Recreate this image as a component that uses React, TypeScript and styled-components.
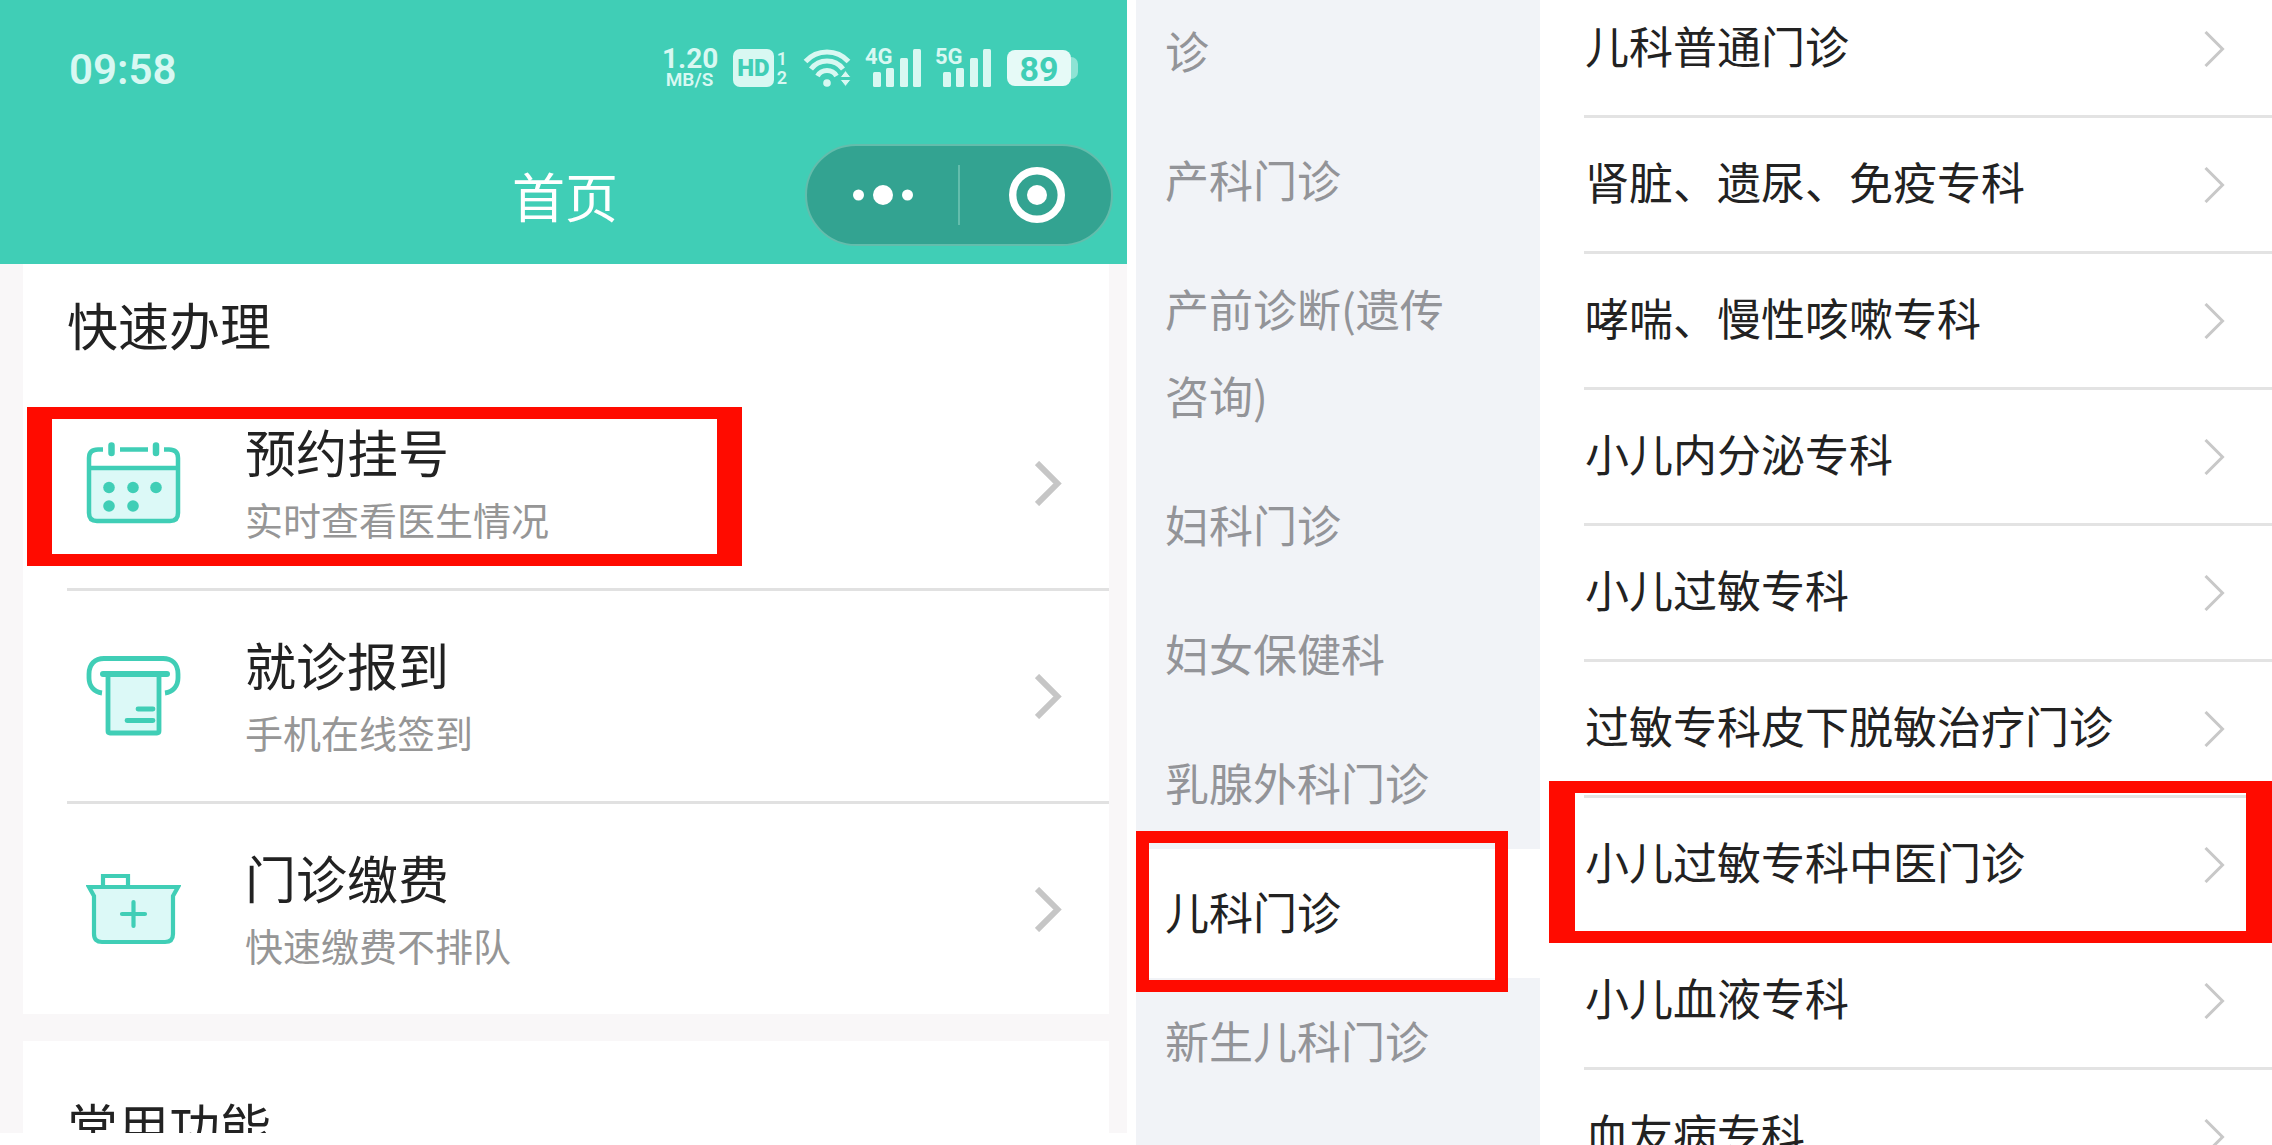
import React from "react";
import styled, { createGlobalStyle, css } from "styled-components";

const cjk = `"Noto Sans CJK SC", "Noto Sans", sans-serif`;
const latin = `Roboto, "Noto Sans CJK SC", sans-serif`;
const teal = "#40ceb6";
const pale = "#d8f8f2";
const iconFill = "#dcf9f7";

const GlobalStyle = createGlobalStyle`
  *, *::before, *::after { box-sizing: border-box; }
  body { margin: 0; background: #fff; font-family: ${cjk}; color: #222; }
  ul { list-style: none; margin: 0; padding: 0; }
  h1, h2 { margin: 0; font-weight: 400; }
  a { color: inherit; text-decoration: none; }
  svg { display: block; flex: none; }
  button { font: inherit; color: inherit; border: 0; padding: 0; background: none; cursor: pointer; }
`;

const Page = styled.div`
  display: grid;
  grid-template-columns: minmax(0, 1127fr) minmax(0, 1136fr);
  column-gap: 9px;
  height: 100vh;
  overflow: hidden;
`;

const HomePanel = styled.section`
  display: flex;
  flex-direction: column;
  margin-bottom: 12px;
  min-height: 0;
  overflow: hidden;
  background: #f9f7f8;
`;

const Header = styled.header`
  flex: none;
  background: ${teal};
  color: #fff;
  padding-bottom: 10px;
`;

const StatusBar = styled.div`
  display: flex;
  align-items: center;
  justify-content: space-between;
  height: 136px;
  padding: 0 49px 0 69px;
  font-family: ${latin};
  color: ${pale};
`;

const Clock = styled.time`
  padding-top: 2px;
  font-size: 42px;
  font-weight: 600;
`;

const StatusItems = styled.div`
  display: flex;
  align-items: center;
  gap: 16px;
  height: 38px;
`;

const Speed = styled.div`
  width: 55px;
  text-align: center;
  font-size: 28px;
  line-height: 24px;
  font-weight: 700;
`;

const SpeedUnit = styled.div`
  font-size: 19px;
  line-height: 18px;
  font-weight: 600;
`;

const HdGroup = styled.div`
  display: flex;
  align-items: center;
  gap: 3px;
  width: 54px;
`;

const HdBadge = styled.span`
  width: 42px;
  height: 38px;
  border-radius: 7px;
  background: ${pale};
  color: ${teal};
  font-size: 24px;
  line-height: 38px;
  font-weight: 900;
  text-align: center;
`;

const SimNumbers = styled.span`
  display: flex;
  flex-direction: column;
  font-size: 18px;
  line-height: 19px;
  font-weight: 600;
`;

const SignalBox = styled.div`
  position: relative;
  width: 54px;
  height: 38px;
`;

const SignalLabel = styled.span`
  position: absolute;
  top: -3px;
  left: -2px;
  font-size: 22px;
  line-height: 22px;
  font-weight: 700;
`;

const Battery = styled.div`
  display: flex;
  align-items: center;
`;

const BatteryBody = styled.span`
  width: 64px;
  height: 36px;
  border-radius: 8px;
  background: #e6faf7;
  color: ${teal};
  font-size: 34px;
  line-height: 38px;
  font-weight: 700;
  text-align: center;
`;

const BatteryTip = styled.span`
  width: 7px;
  height: 22px;
  border-radius: 0 8px 8px 0;
  background: #8ee3d4;
`;

const NavBar = styled.div`
  display: grid;
  grid-template-columns: 1fr auto 1fr;
  align-items: center;
  height: 118px;
  padding: 0 14px 0 17px;
`;

const NavTitle = styled.h1`
  grid-column: 2;
  font-size: 53px;
  line-height: 76px;
`;

const Capsule = styled.div`
  justify-self: end;
  display: flex;
  align-items: center;
  width: 308px;
  height: 102px;
  border: 2px solid #63bdac;
  border-radius: 51px;
  background: #33a391;
`;

const CapsuleButton = styled.button`
  flex: 1;
  height: 100%;
  display: flex;
  align-items: center;
  justify-content: center;
`;

const CapsuleDivider = styled.span`
  width: 2px;
  height: 60px;
  background: #63bdac;
`;

const HomeBody = styled.main`
  flex: 1;
  min-height: 0;
  overflow: hidden;
`;

/* The list is scrolled slightly, so the first card starts under the header. */
const CardStack = styled.div`
  display: flex;
  flex-direction: column;
  gap: 27px;
  margin-top: -24px;
  padding: 0 18px 0 23px;
`;

const Card = styled.section`
  padding-left: 44px;
  background: #fff;
`;

const CardTitle = styled.h2`
  padding: 54px 0 24px;
  font-size: 51px;
  line-height: 60px;
`;

const ServiceItem = styled.li`
  position: relative;
  border-bottom: 3px solid #e1e1e1;
  &:last-child { border-bottom: 0; }
`;

const ServiceLink = styled.a`
  display: flex;
  align-items: center;
  gap: 64px;
  height: 210px;
  padding: 0 47px 0 19px;
`;

const ServiceText = styled.span`
  flex: 1;
  display: flex;
  flex-direction: column;
`;

const ServiceName = styled.span`
  font-size: 51px;
  line-height: 72px;
`;

const ServiceNote = styled.span`
  font-size: 38px;
  line-height: 64px;
  color: #969696;
`;

const highlight = css`
  position: absolute;
  border: 12px solid #ff0b00;
  pointer-events: none;
`;

const ServiceMark = styled.span`
  ${highlight}
  top: 29px;
  bottom: 22px;
  left: -40px;
  width: 715px;
  border-left-width: 25px;
  border-right-width: 25px;
`;

const CategoryMark = styled.span`
  ${highlight}
  top: -18px;
  bottom: -14px;
  left: 0;
  right: 32px;
  border-left-width: 13px;
  border-right-width: 13px;
`;

const ClinicMark = styled.span`
  ${highlight}
  top: -17px;
  bottom: -12px;
  left: -35px;
  right: 0;
  border-left-width: 26px;
  border-right-width: 26px;
`;

const DepartmentPanel = styled.section`
  display: grid;
  grid-template-columns: minmax(0, 404fr) minmax(0, 732fr);
  min-height: 0;
  overflow: hidden;
  font-size: 44px;
`;

const Sidebar = styled.nav`
  min-height: 0;
  overflow: hidden;
  background: #f1f3f7;
`;

const CategoryList = styled.ul`
  margin-top: -12px;
`;

const CategoryItem = styled.li<{ $active?: boolean }>`
  position: relative;
  background: ${(p) => (p.$active ? "#fff" : "transparent")};
  color: ${(p) => (p.$active ? "#222" : "#939498")};
`;

const CategoryLink = styled.a`
  display: block;
  padding: 19px 80px 23px 29px;
  line-height: 87px;
`;

const ClinicPane = styled.main`
  min-height: 0;
  overflow: hidden;
  padding-left: 44px;
`;

const ClinicList = styled.ul`
  margin-top: -18px;
`;

const ClinicItem = styled.li`
  position: relative;
  border-bottom: 3px solid #e3e3e3;
`;

const ClinicLink = styled.a`
  display: flex;
  align-items: center;
  justify-content: space-between;
  height: 133px;
  padding-right: 47px;
  line-height: 64px;
`;

const ClinicName = styled.span`
  padding: 0 0 8px 1px;
`;

const WifiIcon = () => (
  <svg width="48" height="38" viewBox="0 0 48 38" fill="none" stroke={pale} strokeWidth="5" aria-label="WLAN">
    <path d="M2.5 12.5A29 29 0 0 1 45.5 12.5" />
    <path d="M8 20A20 20 0 0 1 40 20" />
    <path d="M14.5 27A11 11 0 0 1 33.500 27" />
    <circle cx="24" cy="34" r="3.800" fill={pale} stroke="none" />
    <path d="M37 28.500L42.500 21.500L48 28.500ZM37 30.500H48L42.500 37.500Z" fill={pale} stroke={teal} strokeWidth="1" />
  </svg>
);

const Signal = ({ label }: { label: string }) => (
  <SignalBox>
    <SignalLabel>{label}</SignalLabel>
    <svg width="54" height="38" viewBox="0 0 54 38" fill={pale}>
      <rect x="6" y="23" width="8" height="15" rx="1.500" />
      <rect x="19" y="19" width="8" height="19" rx="1.500" />
      <rect x="33" y="9" width="8" height="29" rx="1.500" />
      <rect x="46" y="0" width="8" height="38" rx="1.500" />
    </svg>
  </SignalBox>
);

const MoreIcon = () => (
  <svg width="62" height="20" viewBox="0 0 62 20" fill="#fff">
    <circle cx="6.500" cy="10" r="5.500" />
    <circle cx="31" cy="10" r="10" />
    <circle cx="55.500" cy="10" r="5.500" />
  </svg>
);

const CloseIcon = () => (
  <svg width="58" height="58" viewBox="0 0 58 58" fill="none">
    <circle cx="30" cy="29" r="24.300" stroke="#fff" strokeWidth="7.400" />
    <circle cx="30" cy="29" r="10" fill="#fff" />
  </svg>
);

const CalendarIcon = () => (
  <svg width="95" height="82" viewBox="0 0 95 82" fill="none" stroke={teal} strokeWidth="4.500">
    <path d="M3 27H92V71A7 7 0 0 1 85 79H10A7 7 0 0 1 3 71Z" fill={iconFill} stroke="none" />
    <path d="M17 7.500H12Q3 7.500 3 16V71Q3 79 11 79H84Q92 79 92 71V16Q92 7.500 83 7.500H78M34 7.500H62M3 26H92" />
    <path d="M25.500 3.500V11M70 3.500V11" strokeWidth="6.500" strokeLinecap="round" />
    <g fill={teal} stroke="none">
      <circle cx="23" cy="45.500" r="5.800" />
      <circle cx="47" cy="45.500" r="5.800" />
      <circle cx="70" cy="45.500" r="5.800" />
      <circle cx="23" cy="64" r="5.800" />
      <circle cx="47" cy="64" r="5.800" />
    </g>
  </svg>
);

const TicketIcon = () => (
  <svg width="95" height="82" viewBox="0 0 95 82" fill="none" stroke={teal} strokeWidth="4.800">
    <path d="M16 38C8 37 3 31 3 23V19C3 9 9 3.500 18 3.500H77C86 3.500 92 9 92 19V23C92 31 87 37 79 38" />
    <path d="M22 19H73V76Q73 78 71 78H24Q22 78 22 76Z" fill={iconFill} />
    <path d="M17 19H81" strokeWidth="6" strokeLinecap="round" />
    <path d="M52 54H67M41 65.500H67" strokeLinecap="round" />
  </svg>
);

const KitIcon = () => (
  <svg width="95" height="72" viewBox="0 0 95 72" fill="none" stroke={teal} strokeWidth="4.200">
    <path d="M17 14V3H42V14" />
    <path d="M3 14H92L87 23V61Q87 69 79 69H16Q8 69 8 61V23Z" fill={iconFill} />
    <path d="M47.500 29V53M36 41H59" strokeLinecap="round" />
  </svg>
);

const ServiceArrow = () => (
  <svg width="27" height="45" viewBox="0 0 27 45" fill="none" stroke="#c6c6c6" strokeWidth="6">
    <path d="M2 2L22.500 22.500L2 43" />
  </svg>
);

const ClinicArrow = () => (
  <svg width="21" height="36" viewBox="0 0 21 36" fill="none" stroke="#c8c8c8" strokeWidth="3">
    <path d="M1.500 1L18.500 18L1.500 35" />
  </svg>
);

const services = [
  { name: "预约挂号", note: "实时查看医生情况", Icon: CalendarIcon, marked: true },
  { name: "就诊报到", note: "手机在线签到", Icon: TicketIcon, marked: false },
  { name: "门诊缴费", note: "快速缴费不排队", Icon: KitIcon, marked: false },
];

const categories = [
  "诊",
  "产科门诊",
  "产前诊断(遗传咨询)",
  "妇科门诊",
  "妇女保健科",
  "乳腺外科门诊",
  "儿科门诊",
  "新生儿科门诊",
];
const activeCategory = "儿科门诊";

const clinics = [
  "儿科普通门诊",
  "肾脏、遗尿、免疫专科",
  "哮喘、慢性咳嗽专科",
  "小儿内分泌专科",
  "小儿过敏专科",
  "过敏专科皮下脱敏治疗门诊",
  "小儿过敏专科中医门诊",
  "小儿血液专科",
  "血友病专科",
];
const markedClinic = "小儿过敏专科中医门诊";

export default function App() {
  return (
    <>
      <GlobalStyle />
      <Page>
        <HomePanel>
          <Header>
            <StatusBar>
              <Clock>09:58</Clock>
              <StatusItems>
                <Speed>
                  1.20
                  <SpeedUnit>MB/S</SpeedUnit>
                </Speed>
                <HdGroup>
                  <HdBadge>HD</HdBadge>
                  <SimNumbers>
                    <span>1</span>
                    <span>2</span>
                  </SimNumbers>
                </HdGroup>
                <WifiIcon />
                <Signal label="4G" />
                <Signal label="5G" />
                <Battery>
                  <BatteryBody>89</BatteryBody>
                  <BatteryTip />
                </Battery>
              </StatusItems>
            </StatusBar>
            <NavBar>
              <NavTitle>首页</NavTitle>
              <Capsule>
                <CapsuleButton aria-label="更多">
                  <MoreIcon />
                </CapsuleButton>
                <CapsuleDivider />
                <CapsuleButton aria-label="关闭">
                  <CloseIcon />
                </CapsuleButton>
              </Capsule>
            </NavBar>
          </Header>
          <HomeBody>
            <CardStack>
              <Card>
                <CardTitle>快速办理</CardTitle>
                <ul>
                  {services.map(({ name, note, Icon, marked }) => (
                    <ServiceItem key={name}>
                      <ServiceLink href="#">
                        <Icon />
                        <ServiceText>
                          <ServiceName>{name}</ServiceName>
                          <ServiceNote>{note}</ServiceNote>
                        </ServiceText>
                        <ServiceArrow />
                      </ServiceLink>
                      {marked && <ServiceMark />}
                    </ServiceItem>
                  ))}
                </ul>
              </Card>
              <Card>
                <CardTitle>常用功能</CardTitle>
              </Card>
            </CardStack>
          </HomeBody>
        </HomePanel>
        <DepartmentPanel>
          <Sidebar>
            <CategoryList>
              {categories.map((name) => (
                <CategoryItem key={name} $active={name === activeCategory}>
                  <CategoryLink href="#">{name}</CategoryLink>
                  {name === activeCategory && <CategoryMark />}
                </CategoryItem>
              ))}
            </CategoryList>
          </Sidebar>
          <ClinicPane>
            <ClinicList>
              {clinics.map((name) => (
                <ClinicItem key={name}>
                  <ClinicLink href="#">
                    <ClinicName>{name}</ClinicName>
                    <ClinicArrow />
                  </ClinicLink>
                  {name === markedClinic && <ClinicMark />}
                </ClinicItem>
              ))}
            </ClinicList>
          </ClinicPane>
        </DepartmentPanel>
      </Page>
    </>
  );
}
